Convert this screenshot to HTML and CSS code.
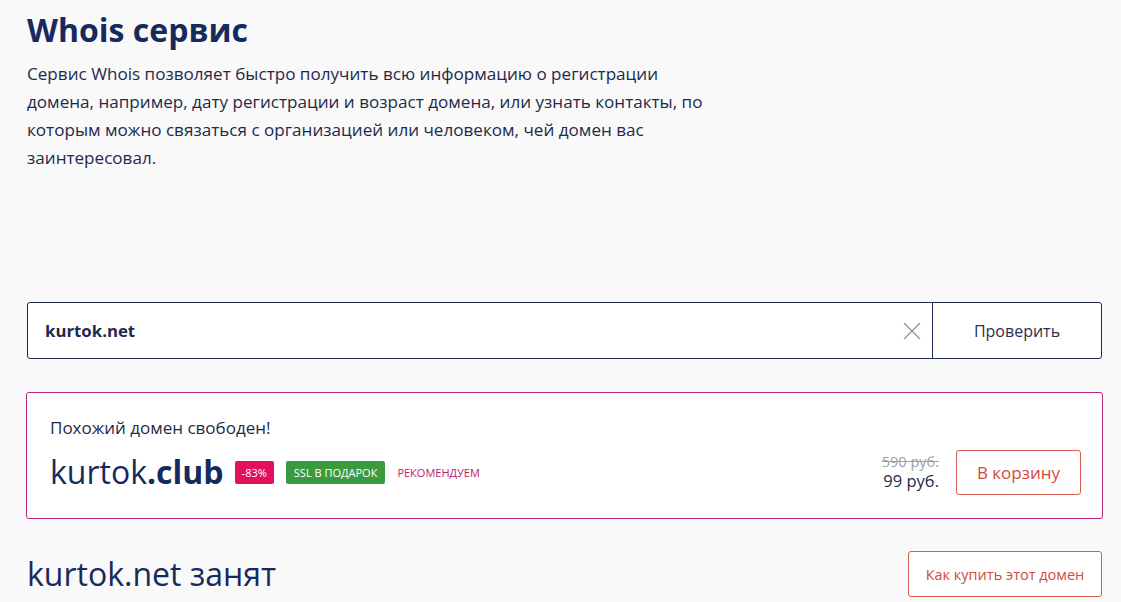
FILE: index.html
```html
<!DOCTYPE html>
<html lang="ru">
<head>
<meta charset="utf-8">
<title>Whois сервис</title>
<link rel="stylesheet" href="styles.css">
</head>
<body>
<main class="page">
  <header class="intro">
    <h1 class="title">Whois сервис</h1>
    <p class="lead">Сервис Whois позволяет быстро получить всю информацию о регистрации домена, например, дату регистрации и возраст домена, или узнать контакты, по которым можно связаться с организацией или человеком, чей домен вас заинтересовал.</p>
  </header>

  <form class="search">
    <div class="search-field">
      <span class="search-value">kurtok.net</span>
      <button type="button" class="clear" aria-label="Очистить">
        <svg width="18" height="18" viewBox="0 0 18 18"><path d="M1 1 L17 17 M17 1 L1 17" stroke="#8a8f9c" stroke-width="1.2" fill="none"/></svg>
      </button>
    </div>
    <button type="button" class="search-btn">Проверить</button>
  </form>

  <section class="offer">
    <div class="offer-left">
      <div class="offer-note">Похожий домен свободен!</div>
      <div class="offer-domain-row">
        <span class="offer-domain">kurtok<b>.club</b></span>
        <span class="badge badge-sale">-83%</span>
        <span class="badge badge-ssl">SSL В ПОДАРОК</span>
        <span class="recommend">РЕКОМЕНДУЕМ</span>
      </div>
    </div>
    <div class="offer-right">
      <div class="prices">
        <span class="old-price">590 руб.</span>
        <span class="new-price">99 руб.</span>
      </div>
      <button type="button" class="cart-btn">В корзину</button>
    </div>
  </section>

  <section class="taken">
    <h2 class="taken-title">kurtok.net занят</h2>
    <button type="button" class="buy-btn">Как купить этот домен</button>
  </section>
</main>
</body>
</html>
```

FILE: styles.css
```css
* { box-sizing: border-box; }
html, body { margin: 0; padding: 0; }
body {
  background: #f9f9f9;
  font-family: "Open Sans", "Noto Sans", sans-serif;
  color: #1d2a52;
  overflow: hidden;
}
.page {
  padding: 0 19px 0 27px;
}
.intro {
  padding-top: 8px;
}
.title {
  margin: 0;
  font-size: 32px;
  line-height: 44px;
  font-weight: 700;
  color: #162a5e;
}
.lead {
  margin: 8px 0 0;
  width: 700px;
  font-size: 17.1px;
  line-height: 28px;
  color: #1f2a4a;
}
.search {
  margin-top: 130px;
  display: flex;
  height: 57px;
  border: 1px solid #1d2951;
  border-radius: 3px;
  background: #fff;
}
.search-field {
  flex: 1;
  display: flex;
  align-items: center;
  padding-left: 17px;
  border-right: 1px solid #1d2951;
}
.search-value {
  flex: 1;
  font-weight: 700;
  font-size: 16.8px;
  color: #1d2a4e;
}
.clear {
  border: 0;
  background: none;
  padding: 0;
  width: 40px;
  height: 40px;
  display: flex;
  align-items: center;
  justify-content: center;
}
.search-btn {
  width: 168px;
  border: 0;
  background: none;
  font-family: inherit;
  font-size: 16px;
  color: #2a3150;
}
.offer {
  margin-top: 33px;
  margin-left: -1px;
  margin-right: -1px;
  height: 127px;
  border: 1px solid #b8267c;
  border-radius: 3px;
  background: #fff;
  display: flex;
  justify-content: space-between;
  padding: 24px 21px 0 23px;
}
.offer-note {
  font-size: 17px;
  line-height: 22px;
  color: #1f2a4a;
}
.offer-domain-row {
  margin-top: 11px;
  display: flex;
  align-items: center;
}
.offer-domain {
  font-size: 32px;
  line-height: 44px;
  color: #162a5e;
  margin-right: 11px;
}
.offer-domain b { font-weight: 700; }
.badge {
  font-size: 11px;
  line-height: 23px;
  height: 23px;
  padding: 0 6px;
  border-radius: 2px;
  color: #fff;
  margin-right: 12px;
}
.badge-sale { background: #e3105e; padding: 0 7px; }
.badge-ssl { background: #3b9a3e; padding: 0 8px; }
.recommend {
  font-size: 11px;
  color: #c2186c;
}
.offer-right {
  display: flex;
  align-items: center;
  padding-top: 33px;
  align-self: flex-start;
}
.prices {
  display: flex;
  flex-direction: column;
  align-items: flex-end;
  margin-right: 17px;
}
.old-price {
  font-size: 14.5px;
  line-height: 17px;
  color: #9aa0aa;
  text-decoration: line-through;
}
.new-price {
  font-size: 16.5px;
  line-height: 22px;
  color: #1d2a4e;
}
.cart-btn {
  width: 125px;
  height: 45px;
  border: 1px solid #d65a4e;
  border-radius: 3px;
  background: #fff;
  font-family: inherit;
  font-size: 17px;
  color: #d2493b;
}
.taken {
  margin-top: 32px;
  display: flex;
  justify-content: space-between;
  align-items: center;
}
.taken-title {
  margin: 0;
  font-size: 32px;
  font-weight: 400;
  color: #162a5e;
  line-height: 44px;
}
.buy-btn {
  width: 194px;
  height: 46px;
  border: 1px solid #d65a4e;
  border-radius: 3px;
  background: #fff;
  font-family: inherit;
  font-size: 14.5px;
  color: #d2493b;
}
```
